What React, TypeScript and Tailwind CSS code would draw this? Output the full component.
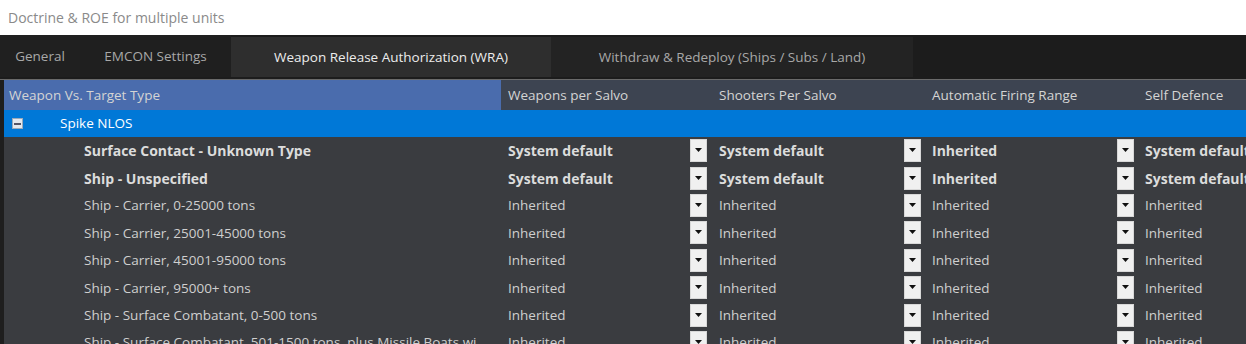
import React from 'react';

const font = { fontFamily: '"Open Sans", "Noto Sans", sans-serif' };

type Row = { name: string; bold?: boolean; vals: string[] };

const rows: Row[] = [
  { name: 'Surface Contact - Unknown Type', bold: true, vals: ['System default', 'System default', 'Inherited', 'System default'] },
  { name: 'Ship - Unspecified', bold: true, vals: ['System default', 'System default', 'Inherited', 'System default'] },
  { name: 'Ship - Carrier, 0-25000 tons', vals: ['Inherited', 'Inherited', 'Inherited', 'Inherited'] },
  { name: 'Ship - Carrier, 25001-45000 tons', vals: ['Inherited', 'Inherited', 'Inherited', 'Inherited'] },
  { name: 'Ship - Carrier, 45001-95000 tons', vals: ['Inherited', 'Inherited', 'Inherited', 'Inherited'] },
  { name: 'Ship - Carrier, 95000+ tons', vals: ['Inherited', 'Inherited', 'Inherited', 'Inherited'] },
  { name: 'Ship - Surface Combatant, 0-500 tons', vals: ['Inherited', 'Inherited', 'Inherited', 'Inherited'] },
  { name: 'Ship - Surface Combatant, 501-1500 tons, plus Missile Boats wi', vals: ['Inherited', 'Inherited', 'Inherited', 'Inherited'] },
];

function DropBtn() {
  return (
    <div className="flex h-[23px] w-[17px] shrink-0 items-start justify-center border border-[#d8d8d8] bg-[#f0f0f0] pt-[8px]">
      <svg width="7" height="4" viewBox="0 0 7 4">
        <path d="M0 0h7L3.5 4z" fill="#111" />
      </svg>
    </div>
  );
}

export default function App() {
  return (
    <div className="h-[344px] w-[1246px] overflow-hidden bg-white" style={font}>
      <div className="flex h-[35px] items-center pl-[8px] text-[14px] text-[#8a8a8a]">
        Doctrine &amp; ROE for multiple units
      </div>

      {/* tab strip */}
      <div className="flex h-[45px] items-end border-b border-[#6a6a6a] bg-[#1c1c1c] pb-[2px] text-[13.5px]">
        <div className="flex h-[42px] w-[80px] items-center justify-center bg-[#202020] text-[#a8a8a8]">General</div>
        <div className="flex h-[42px] w-[151px] items-center justify-center bg-[#1f1f1f] text-[#a8a8a8]">EMCON Settings</div>
        <div className="flex h-[40px] w-[320px] items-center justify-center bg-[#2e2e2e] text-[#ececec]">
          Weapon Release Authorization (WRA)
        </div>
        <div className="flex h-[40px] w-[362px] items-center justify-center bg-[#232323] text-[#a8a8a8]">
          Withdraw &amp; Redeploy (Ships / Subs / Land)
        </div>
      </div>

      <div className="flex">
        <div className="w-[4px] shrink-0 bg-[#1e1e1e]" />
        <div className="flex-1 overflow-hidden">
          {/* header */}
          <div className="flex h-[30px] items-center text-[13.5px] text-[#d4d4d4]">
            <div className="flex h-full w-[497px] shrink-0 items-center bg-[#4a6cad] pl-[5px]">Weapon Vs. Target Type</div>
            <div className="flex h-full flex-1 items-center bg-[#3d4451]">
              <div className="w-[211px] shrink-0 pl-[7px]">Weapons per Salvo</div>
              <div className="w-[213px] shrink-0 pl-[7px]">Shooters Per Salvo</div>
              <div className="w-[213px] shrink-0 pl-[7px]">Automatic Firing Range</div>
              <div className="shrink-0 pl-[7px]">Self Defence</div>
            </div>
          </div>

          {/* group row */}
          <div className="flex h-[27px] items-center bg-[#0078d7] text-[13.5px] text-white">
            <div className="ml-[8px] flex h-[11px] w-[11px] items-center justify-center border border-[#9ab] bg-[#e4e8ee]">
              <div className="h-[2px] w-[7px] bg-[#556]" />
            </div>
            <span className="ml-[37px]">Spike NLOS</span>
          </div>

          <div className="bg-[#3a3c40]">
            {rows.map((r) => (
              <div
                key={r.name}
                className={`flex h-[27.4px] items-center whitespace-nowrap ${
                  r.bold ? 'text-[14px] font-bold text-[#dcdcdc]' : 'text-[13.5px] text-[#cfcfcf]'
                }`}
              >
                <div className="w-[497px] shrink-0 overflow-hidden pl-[80px]">{r.name}</div>
                <div className="flex w-[211px] shrink-0 items-center justify-between pl-[7px] pr-[5px]">
                  <span>{r.vals[0]}</span>
                  <DropBtn />
                </div>
                <div className="flex w-[213px] shrink-0 items-center justify-between pl-[7px] pr-[4px]">
                  <span>{r.vals[1]}</span>
                  <DropBtn />
                </div>
                <div className="flex w-[213px] shrink-0 items-center justify-between pl-[7px] pr-[4px]">
                  <span>{r.vals[2]}</span>
                  <DropBtn />
                </div>
                <div className="shrink-0 pl-[7px]">{r.vals[3]}</div>
              </div>
            ))}
          </div>
        </div>
      </div>
    </div>
  );
}
